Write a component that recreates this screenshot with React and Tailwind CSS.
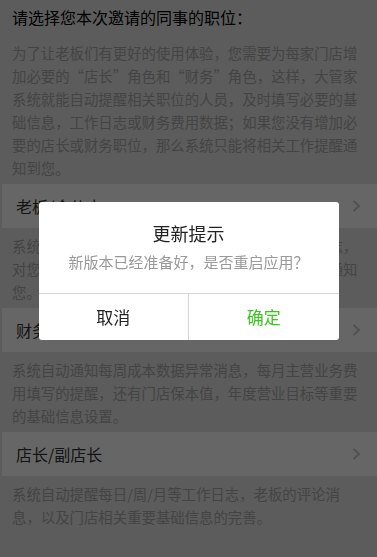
const font = { fontFamily: '"Noto Sans CJK SC", "Noto Sans", sans-serif' };

const sections = [
  {
    label: "老板/合伙人",
    desc: "系统自动汇总门店每日经营数据与各岗位的工作日志，对您的评论与审批进行及时的提醒，并将异常消息通知您。",
  },
  {
    label: "财务/出纳",
    desc: "系统自动通知每周成本数据异常消息，每月主营业务费用填写的提醒，还有门店保本值，年度营业目标等重要的基础信息设置。",
  },
  {
    label: "店长/副店长",
    desc: "系统自动提醒每日/周/月等工作日志，老板的评论消息，以及门店相关重要基础信息的完善。",
  },
];

function Chevron() {
  return (
    <svg width="9" height="12" viewBox="0 0 9 12" fill="none" className="shrink-0">
      <polyline points="1.5,1 7,6 1.5,11" stroke="#c7c7cc" strokeWidth="2" />
    </svg>
  );
}

function Row({ label }) {
  return (
    <div className="ml-[2px] h-[44px] bg-white flex items-center justify-between pl-[14px] pr-[16px]">
      <span className="text-[16px] text-[#333]">{label}</span>
      <Chevron />
    </div>
  );
}

function Desc({ children }) {
  return (
    <p className="pl-3 pr-3 pt-[6px] pb-[5px] text-[14.4px] leading-[23px] text-[#aaa]">{children}</p>
  );
}

function Dialog() {
  return (
    <div className="fixed inset-0 bg-black/60 flex justify-center pt-[202px]">
      <div className="w-[300px] h-[138px] bg-white rounded-[3px] overflow-hidden flex flex-col">
        <div className="pt-[21px] text-center text-[18px] leading-[20px] text-[#222]">更新提示</div>
        <div className="mt-[9px] pb-[21px] text-center text-[15px] leading-[20px] text-[#999]">
          新版本已经准备好，是否重启应用？
        </div>
        <div className="flex flex-1 border-t border-[#d5d5d6]">
          <button className="flex-1 text-[17px] text-[#222]">取消</button>
          <button className="flex-1 border-l border-[#d5d5d6] text-[17px] text-[#3cc51f]">确定</button>
        </div>
      </div>
    </div>
  );
}

export default function App() {
  return (
    <div lang="zh-CN" style={font} className="min-h-[557px] bg-[#e6e6e6]">
      <div className="pl-3 py-[6px] text-[16px] leading-[23px] text-black">请选择您本次邀请的同事的职位：</div>
      <Desc>
        为了让老板们有更好的使用体验，您需要为每家门店增加必要的“店长”角色和“财务”角色，这样，大管家系统就能自动提醒相关职位的人员，及时填写必要的基础信息，工作日志或财务费用数据；如果您没有增加必要的店长或财务职位，那么系统只能将相关工作提醒通知到您。
      </Desc>
      {sections.map((s) => (
        <div key={s.label}>
          <Row label={s.label} />
          <Desc>{s.desc}</Desc>
        </div>
      ))}
      <Dialog />
    </div>
  );
}
